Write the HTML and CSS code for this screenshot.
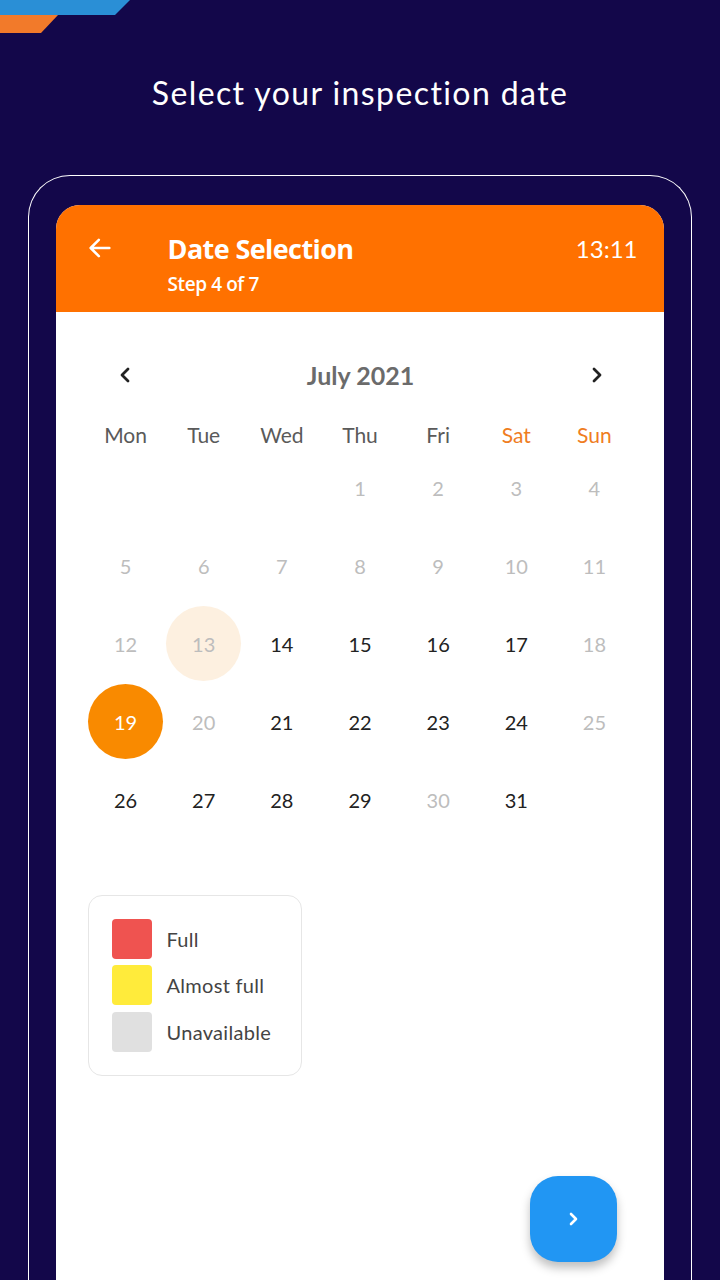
FILE: index.html
```html
<!DOCTYPE html>
<html>
<head>
<meta charset="utf-8">
<link rel="stylesheet" href="styles.css">
</head>
<body>
<svg class="deco" width="140" height="40" viewBox="0 0 140 40">
  <polygon points="0,0 130,0 115,15 0,15" fill="#2a8fd6"/>
  <polygon points="0,15 58,15 41,33 0,33" fill="#f27a2a"/>
</svg>
<div class="screen">
  <h1 class="page-title">Select your inspection date</h1>
  <div class="frame">
    <div class="card">
      <div class="card-header">
        <svg class="back" width="28" height="28" viewBox="0 0 24 24"><path d="M20 12H5M11 5l-7 7 7 7" fill="none" stroke="#fff" stroke-width="2.2" stroke-linecap="round" stroke-linejoin="round"/></svg>
        <div class="titles">
          <div class="title">Date Selection</div>
          <div class="step">Step 4 of 7</div>
        </div>
        <div class="time">13:11</div>
      </div>
      <div class="card-body">
        <div class="nav">
          <svg class="chev" width="20" height="20" viewBox="0 0 20 20"><path d="M13 4l-6 6 6 6" fill="none" stroke="#222" stroke-width="2.8" stroke-linecap="round" stroke-linejoin="round"/></svg>
          <div class="month">July 2021</div>
          <svg class="chev" width="20" height="20" viewBox="0 0 20 20"><path d="M7 4l6 6-6 6" fill="none" stroke="#222" stroke-width="2.8" stroke-linecap="round" stroke-linejoin="round"/></svg>
        </div>
        <div class="weekdays">
          <span>Mon</span><span>Tue</span><span>Wed</span><span>Thu</span><span>Fri</span><span class="we">Sat</span><span class="we">Sun</span>
        </div>
        <div class="days">
          <span></span><span></span><span></span>
          <span class="off">1</span><span class="off">2</span><span class="off">3</span><span class="off">4</span>
          <span class="off">5</span><span class="off">6</span><span class="off">7</span><span class="off">8</span><span class="off">9</span><span class="off">10</span><span class="off">11</span>
          <span class="off">12</span><span class="off today"><i>13</i></span><span>14</span><span>15</span><span>16</span><span>17</span><span class="off">18</span>
          <span class="sel"><i>19</i></span><span class="off">20</span><span>21</span><span>22</span><span>23</span><span>24</span><span class="off">25</span>
          <span>26</span><span>27</span><span>28</span><span>29</span><span class="off">30</span><span>31</span><span></span>
        </div>
        <div class="legend">
          <div class="lg-row"><span class="sw full"></span><span>Full</span></div>
          <div class="lg-row"><span class="sw almost"></span><span>Almost full</span></div>
          <div class="lg-row"><span class="sw unav"></span><span>Unavailable</span></div>
        </div>
        <button class="fab">
          <svg width="20" height="20" viewBox="0 0 20 20"><path d="M8 5l5 5-5 5" fill="none" stroke="#fff" stroke-width="2.6" stroke-linecap="round" stroke-linejoin="round"/></svg>
        </button>
      </div>
    </div>
  </div>
</div>
</body>
</html>
```
FILE: styles.css
```css
* { box-sizing: border-box; }
html, body { margin: 0; padding: 0; }
body {
  background: #13074a;
  width: 720px;
  height: 1280px;
  overflow: hidden;
  font-family: "Lato", "Noto Sans", sans-serif;
  position: relative;
}
.deco { position: absolute; left: 0; top: 0; }
.screen { display: flex; flex-direction: column; align-items: center; height: 1280px; overflow: hidden; }
.page-title {
  margin: 0;
  height: 175px;
  flex: none;
  padding-top: 73px;
  font-weight: 400;
  font-size: 32px;
  line-height: 40px;
  letter-spacing: 1.4px;
  color: #fff;
}
.frame {
  width: 664px;
  flex: 1;
  border: 1.5px solid #fff;
  border-bottom: none;
  border-radius: 42px 42px 0 0;
  padding: 28.5px 26.5px 0;
  display: flex;
}
.card {
  width: 608px;
  background: #fff;
  border-radius: 24px 24px 0 0;
  overflow: hidden;
}
.card-header {
  height: 107px;
  background: #ff7100;
  display: flex;
  align-items: flex-start;
  padding: 28px 26px 0 30px;
  color: #fff;
}
.back { margin-top: 1px; }
.titles { margin-left: 54px; flex: 1; }
.title { font-family: "Open Sans", sans-serif; font-weight: 700; font-size: 27px; line-height: 32px; letter-spacing: -0.6px; }
.step { font-family: "Open Sans", sans-serif; font-weight: 600; font-size: 19px; line-height: 26px; margin-top: 6px; letter-spacing: -0.4px; }
.time { font-size: 24px; line-height: 32px; font-weight: 400; }
.card-body {
  padding: 39px 30px 0 31px;
  display: flex;
  flex-direction: column;
}
.nav {
  height: 48px;
  display: flex;
  align-items: center;
  justify-content: space-between;
  padding: 0 27px 0 28px;
}
.month { font-weight: 700; font-size: 25px; color: #6b6b6b; }
.weekdays, .days {
  display: grid;
  grid-template-columns: repeat(7, 1fr);
  width: 547px;
}
.weekdays {
  margin-top: 22px;
  height: 28px;
  align-items: center;
}
.weekdays span { text-align: center; font-size: 21px; color: #5a5a5a; }
.weekdays .we { color: #ef7d1f; }
.days { grid-auto-rows: 78px; }
.days span {
  display: flex;
  align-items: center;
  justify-content: center;
  font-size: 20px;
  color: #222;
}
.days span.off { color: #bdbdbd; }
.days i {
  font-style: normal;
  width: 75px;
  height: 75px;
  border-radius: 50%;
  display: flex;
  align-items: center;
  justify-content: center;
}
.days .today i { background: #fdf0e0; }
.days .sel i { background: #f98a00; color: #fff; }
.legend {
  margin-top: 56px;
  margin-left: 1px;
  width: 214px;
  border: 1px solid #e6e6e6;
  border-radius: 14px;
  padding: 23px 0 23px 23px;
  display: flex;
  flex-direction: column;
  gap: 6.5px;
}
.lg-row { display: flex; align-items: center; gap: 15px; font-size: 20px; letter-spacing: 0.3px; color: #444; }
.sw { width: 40px; height: 40px; border-radius: 4px; flex: none; }
.sw.full { background: #ef5350; }
.sw.almost { background: #ffeb3b; }
.sw.unav { background: #e0e0e0; }
.fab {
  align-self: flex-end;
  margin: 100px 17px 0 0;
  width: 87px;
  height: 86px;
  border: none;
  border-radius: 28px;
  background: #2196f3;
  box-shadow: 0 6px 10px rgba(0,0,0,0.25);
  display: flex;
  align-items: center;
  justify-content: center;
  padding: 0;
}
```
